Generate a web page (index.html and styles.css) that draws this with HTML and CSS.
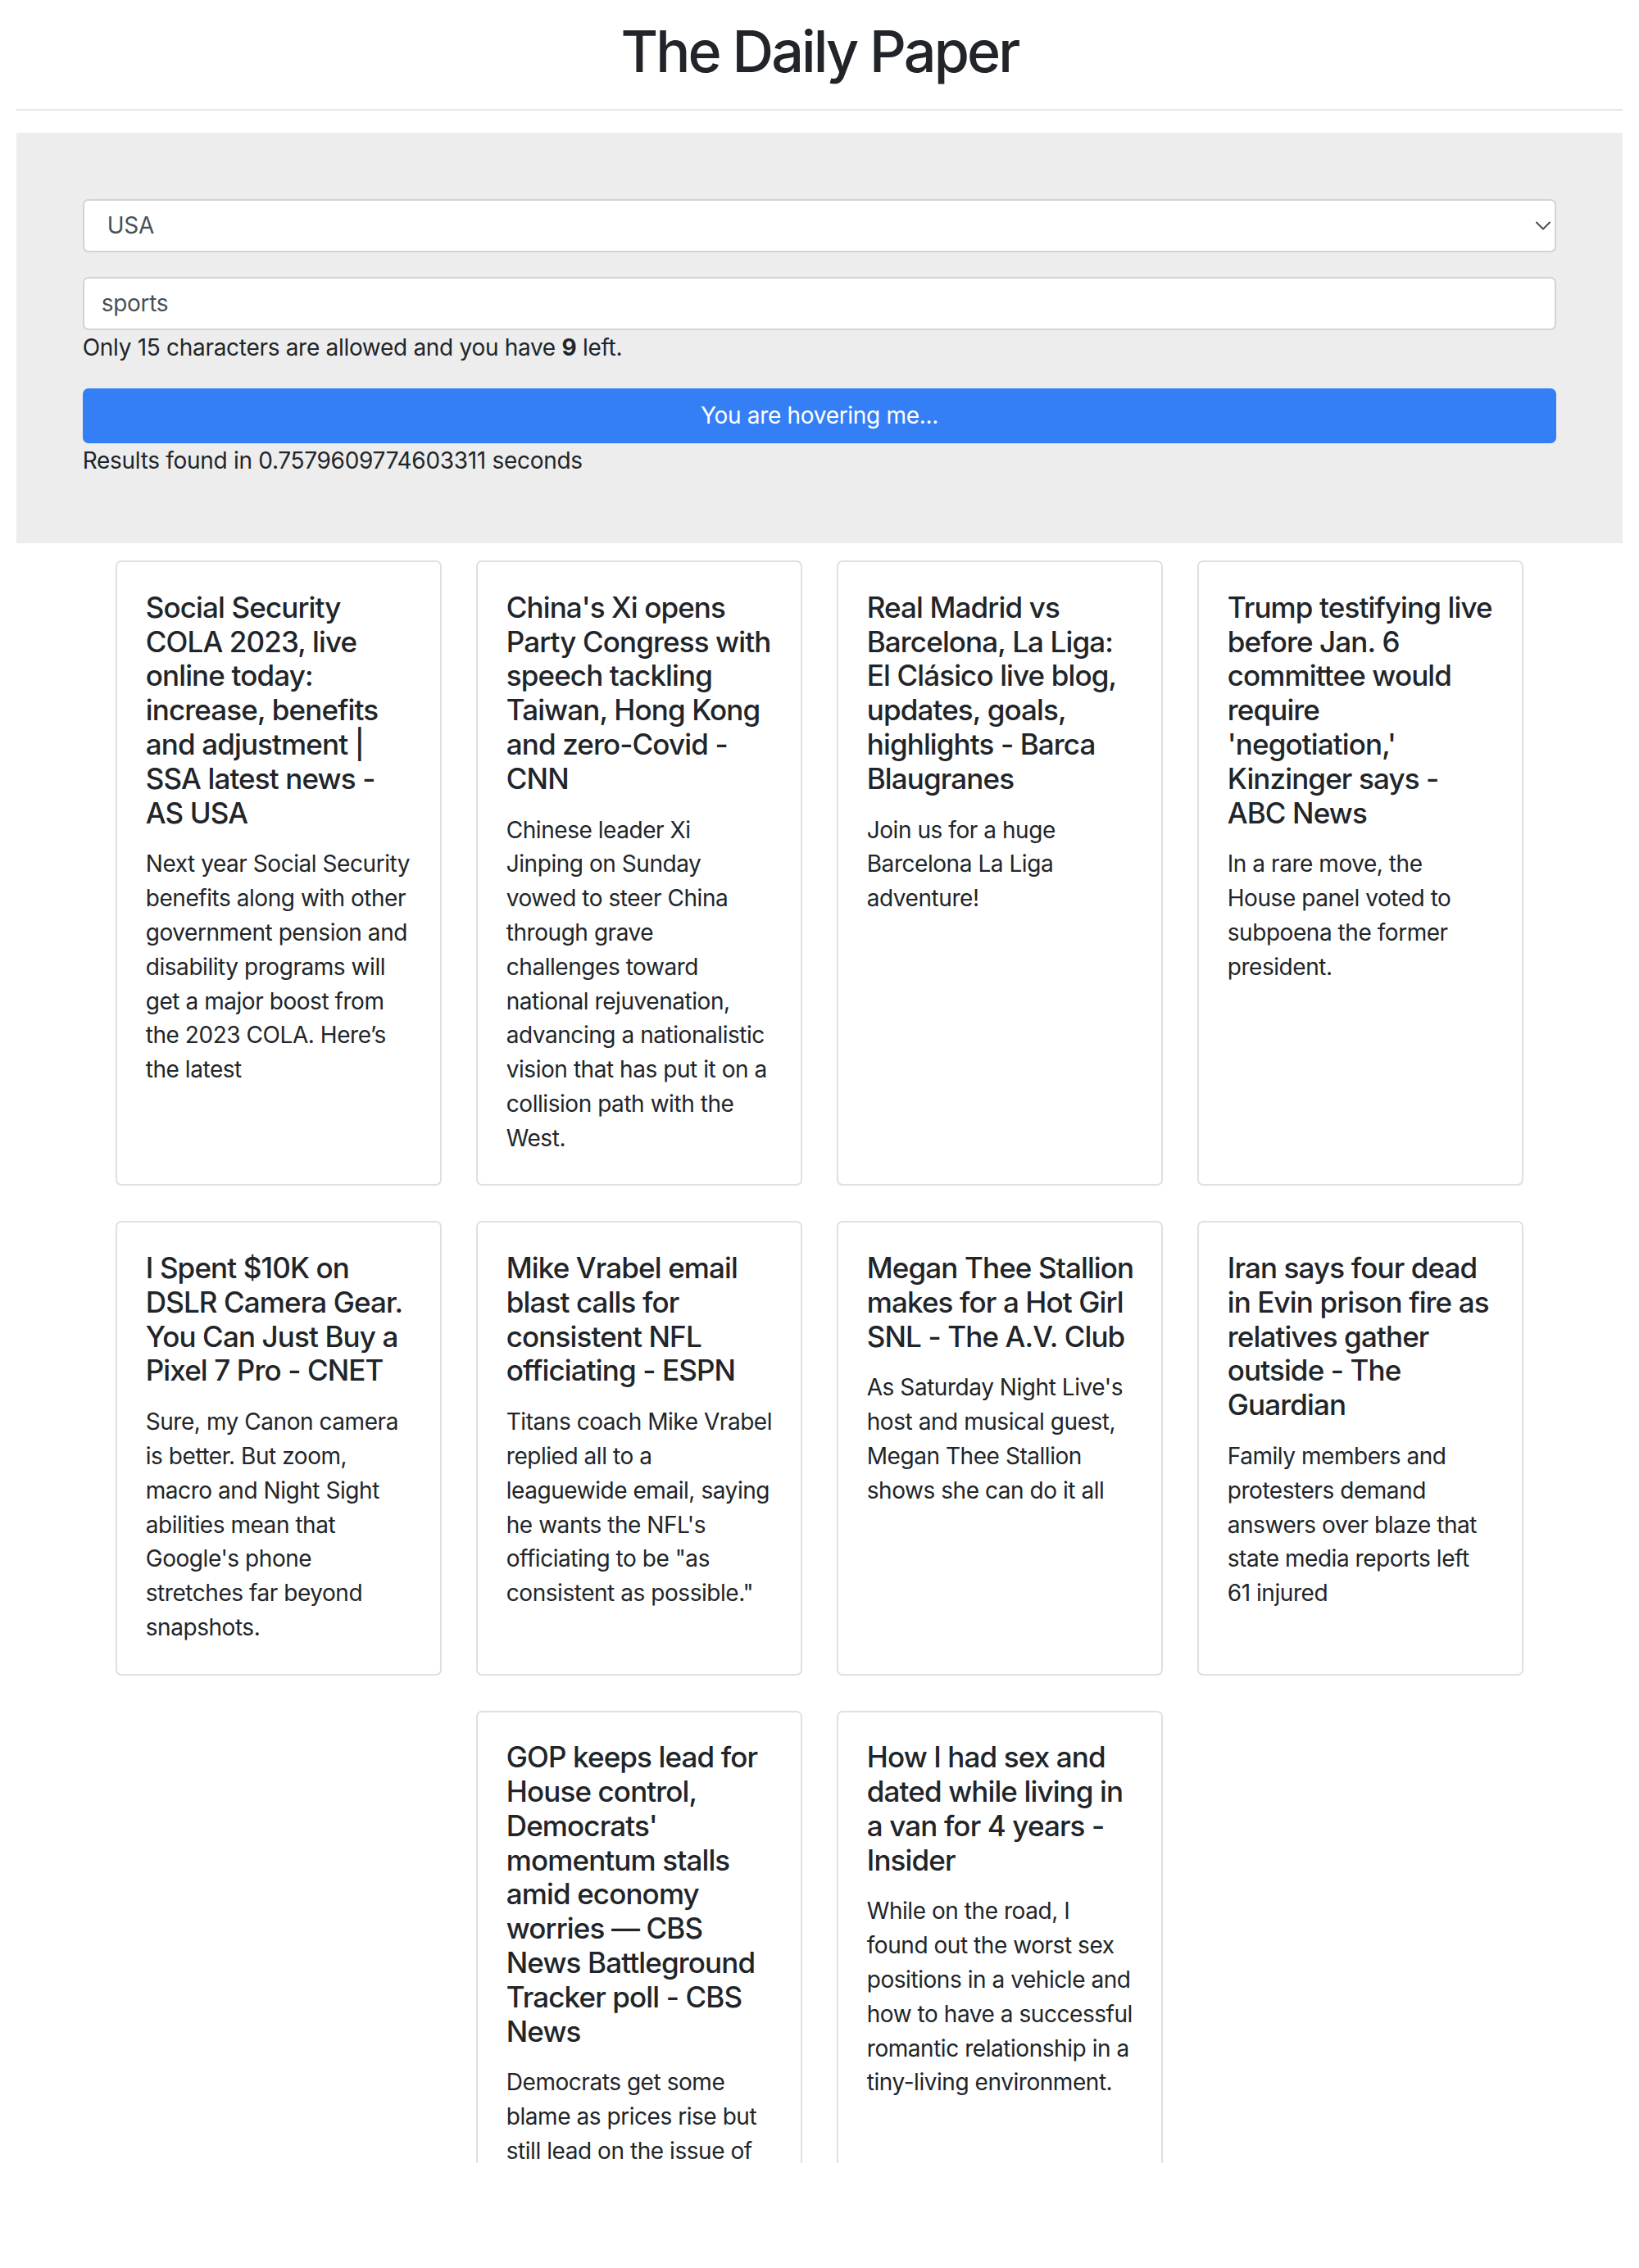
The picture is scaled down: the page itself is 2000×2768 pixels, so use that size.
FILE: index.html
```html
<!DOCTYPE html>
<html lang="en">
<head>
<meta charset="utf-8">
<title>The Daily Paper</title>
<link rel="stylesheet" href="styles.css">
</head>
<body>
<div class="page">
  <header class="masthead">
    <h1 class="masthead-title">The Daily Paper</h1>
    <div class="masthead-rule"></div>
  </header>

  <section class="search-panel">
    <div class="field">
      <select class="select">
        <option>USA</option>
      </select>
      <svg class="chevron" viewBox="0 0 18 11" width="18" height="11" aria-hidden="true">
        <path d="M1 1.5 L9 9.5 L17 1.5" fill="none" stroke="#4a4d52" stroke-width="2" stroke-linecap="round" stroke-linejoin="round"/>
      </svg>
    </div>
    <input class="text-input" type="text" value="sports">
    <p class="help">Only 15 characters are allowed and you have <strong>9</strong> left.</p>
    <button class="btn">You are hovering me...</button>
    <p class="timing">Results found in 0.7579609774603311 seconds</p>
  </section>

  <section class="results">
    <div class="card-grid">
      <article class="card">
        <h5 class="card-title">Social Security<br>COLA 2023, live<br>online today:<br>increase, benefits<br>and adjustment |<br>SSA latest news -<br>AS USA</h5>
        <p class="card-text">Next year Social Security<br>benefits along with other<br>government pension and<br>disability programs will<br>get a major boost from<br>the 2023 COLA. Here’s<br>the latest</p>
      </article>
      <article class="card">
        <h5 class="card-title">China's Xi opens<br>Party Congress with<br>speech tackling<br>Taiwan, Hong Kong<br>and zero-Covid -<br>CNN</h5>
        <p class="card-text">Chinese leader Xi<br>Jinping on Sunday<br>vowed to steer China<br>through grave<br>challenges toward<br>national rejuvenation,<br>advancing a nationalistic<br>vision that has put it on a<br>collision path with the<br>West.</p>
      </article>
      <article class="card">
        <h5 class="card-title">Real Madrid vs<br>Barcelona, La Liga:<br>El Clásico live blog,<br>updates, goals,<br>highlights - Barca<br>Blaugranes</h5>
        <p class="card-text">Join us for a huge<br>Barcelona La Liga<br>adventure!</p>
      </article>
      <article class="card">
        <h5 class="card-title">Trump testifying live<br>before Jan. 6<br>committee would<br>require<br>'negotiation,'<br>Kinzinger says -<br>ABC News</h5>
        <p class="card-text">In a rare move, the<br>House panel voted to<br>subpoena the former<br>president.</p>
      </article>
      <article class="card">
        <h5 class="card-title">I Spent $10K on<br>DSLR Camera Gear.<br>You Can Just Buy a<br>Pixel 7 Pro - CNET</h5>
        <p class="card-text">Sure, my Canon camera<br>is better. But zoom,<br>macro and Night Sight<br>abilities mean that<br>Google's phone<br>stretches far beyond<br>snapshots.</p>
      </article>
      <article class="card">
        <h5 class="card-title">Mike Vrabel email<br>blast calls for<br>consistent NFL<br>officiating - ESPN</h5>
        <p class="card-text">Titans coach Mike Vrabel<br>replied all to a<br>leaguewide email, saying<br>he wants the NFL's<br>officiating to be "as<br>consistent as possible."</p>
      </article>
      <article class="card">
        <h5 class="card-title">Megan Thee Stallion<br>makes for a Hot Girl<br>SNL - The A.V. Club</h5>
        <p class="card-text">As Saturday Night Live's<br>host and musical guest,<br>Megan Thee Stallion<br>shows she can do it all</p>
      </article>
      <article class="card">
        <h5 class="card-title">Iran says four dead<br>in Evin prison fire as<br>relatives gather<br>outside - The<br>Guardian</h5>
        <p class="card-text">Family members and<br>protesters demand<br>answers over blaze that<br>state media reports left<br>61 injured</p>
      </article>
      <article class="card">
        <h5 class="card-title">GOP keeps lead for<br>House control,<br>Democrats'<br>momentum stalls<br>amid economy<br>worries — CBS<br>News Battleground<br>Tracker poll - CBS<br>News</h5>
        <p class="card-text">Democrats get some<br>blame as prices rise but<br>still lead on the issue of<br>abortion rights.</p>
      </article>
      <article class="card">
        <h5 class="card-title">How I had sex and<br>dated while living in<br>a van for 4 years -<br>Insider</h5>
        <p class="card-text">While on the road, I<br>found out the worst sex<br>positions in a vehicle and<br>how to have a successful<br>romantic relationship in a<br>tiny-living environment.</p>
      </article>
    </div>
  </section>
</div>
</body>
</html>
```

FILE: styles.css
```css
* {
  box-sizing: border-box;
}

html,
body {
  margin: 0;
  background: #ffffff;
}

body {
  font-family: Inter, "Liberation Sans", Arial, sans-serif;
  font-size: 28px;
  line-height: 42px;
  color: #212529;
  letter-spacing: -0.3px;
}

.page {
  padding: 0 20px;
}

.masthead {
  padding-top: 21px;
}

.masthead-title {
  margin: 0;
  text-align: center;
  font-size: 70px;
  line-height: 84px;
  font-weight: 500;
  letter-spacing: -2.9px;
}

.masthead-rule {
  height: 2px;
  background: #e6e6e6;
  margin: 27.5px 0 27px;
}

.search-panel {
  background: #ededed;
  padding: 81px 80.7px 80px;
}

.field {
  position: relative;
  height: 65.5px;
  margin-bottom: 29.5px;
}

.select {
  -webkit-appearance: none;
  appearance: none;
  display: block;
  width: 100%;
  height: 65.5px;
  margin: 0;
  padding: 0 60px 0 28px;
  border: 2px solid #ced4da;
  border-radius: 7px;
  background: #ffffff;
  font: inherit;
  letter-spacing: inherit;
  color: #495057;
}

.chevron {
  position: absolute;
  right: 7.5px;
  top: 27.5px;
  pointer-events: none;
}

.text-input {
  display: block;
  width: 100%;
  height: 65.5px;
  margin: 0;
  padding: 0 21px;
  border: 2px solid #ced4da;
  border-radius: 7px;
  background: #ffffff;
  font: inherit;
  letter-spacing: inherit;
  color: #495057;
}

.help {
  margin: 0;
}

.help strong {
  font-weight: 700;
}

.btn {
  display: block;
  width: 100%;
  height: 66.5px;
  margin: 29px 0 0;
  padding: 0;
  border: 0;
  border-radius: 7px;
  background: #347ff5;
  color: #ffffff;
  font: inherit;
  letter-spacing: inherit;
  text-align: center;
}

.timing {
  margin: 0;
}

.results {
  height: 1977.5px;
  overflow: hidden;
  padding-top: 21.5px;
}

.card-grid {
  display: flex;
  flex-wrap: wrap;
  justify-content: center;
  column-gap: 42px;
  row-gap: 43px;
}

.card {
  width: 398px;
  border: 2px solid #e0e0e0;
  border-radius: 7px;
  padding: 34.75px;
  background: #ffffff;
}

.card-title {
  margin: 0 0 21px;
  font-size: 35px;
  line-height: 41.8px;
  font-weight: 500;
  letter-spacing: -0.87px;
  white-space: nowrap;
}

.card-text {
  margin: 0;
  line-height: 41.8px;
  letter-spacing: -0.45px;
  white-space: nowrap;
}
```
